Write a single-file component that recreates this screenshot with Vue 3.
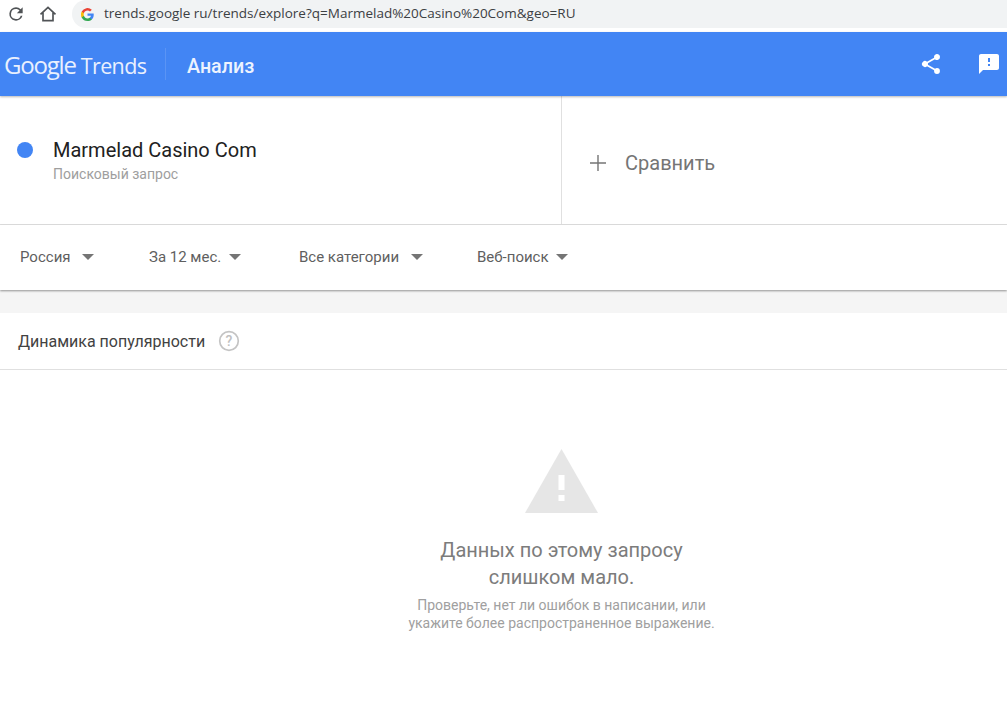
<script setup>
const filters = [
  { label: 'Россия', cls: 'f1' },
  { label: 'За 12 мес.', cls: 'f2' },
  { label: 'Все категории', cls: 'f3' },
  { label: 'Веб-поиск', cls: 'f4' },
]
</script>

<template>
  <div class="page">
    <div class="browser">
      <svg class="nav-icon" viewBox="0 0 24 24" width="20" height="20"><path fill="#505356" d="M17.65 6.35A7.95 7.95 0 0 0 12 4a8 8 0 1 0 7.75 10h-2.08A6 6 0 1 1 12 6c1.66 0 3.14.69 4.22 1.78L13 11h7V4l-2.35 2.35z"/></svg>
      <svg class="nav-icon home" viewBox="0 0 24 24" width="20" height="20"><path fill="none" stroke="#505356" stroke-width="2" d="M3 12.5 12 4l9 8.5M6 10.5V20h12v-9.5"/></svg>
      <div class="url">
        <svg viewBox="0 0 24 24" width="13" height="13"><path fill="#4285f4" d="M23.5 12.3c0-.8-.1-1.600-.2-2.300H12v4.500h6.500a5.500 5.500 0 0 1-2.400 3.600v3h3.900c2.200-2.100 3.500-5.200 3.500-8.800z"/><path fill="#34a853" d="M12 24c3.200 0 6-1.100 8-2.900l-3.900-3c-1.100.7-2.500 1.200-4.100 1.200-3.100 0-5.800-2.100-6.700-5H1.300v3.100A12 12 0 0 0 12 24z"/><path fill="#fbbc05" d="M5.300 14.300a7.200 7.200 0 0 1 0-4.600V6.600h-4a12 12 0 0 0 0 10.800l4-3.100z"/><path fill="#ea4335" d="M12 4.800c1.800 0 3.300.6 4.600 1.800l3.400-3.400A12 12 0 0 0 1.300 6.600l4 3.100c.9-2.800 3.600-4.900 6.700-4.900z"/></svg>
        <span class="url-text">trends.google ru/trends/explore?q=Marmelad%20Casino%20Com&amp;geo=RU</span>
      </div>
    </div>

    <header class="bar">
      <div class="logo"><span class="g">Google</span><span class="t">Trends</span></div>
      <div class="bar-sep"></div>
      <div class="bar-title">Анализ</div>
      <div class="bar-actions">
        <svg viewBox="0 0 24 24" width="24" height="24"><path fill="#fff" d="M18 16.080c-.76 0-1.440.3-1.960.77L8.910 12.700c.05-.23.090-.46.090-.7s-.04-.47-.09-.7l7.050-4.110A2.990 2.990 0 0 0 21 5a3 3 0 1 0-5.910.7L8.040 9.810A3 3 0 1 0 8.040 14.190l7.120 4.160c-.05.21-.08.43-.08.65A2.920 2.920 0 1 0 18 16.080z"/></svg>
        <svg viewBox="0 0 24 24" width="24" height="24"><path fill="#fff" d="M20 2H4c-1.100 0-2 .9-2 2v18l4-4h14c1.100 0 2-.9 2-2V4c0-1.100-.9-2-2-2zm-7 12h-2v-2h2v2zm0-4h-2V6h2v4z"/></svg>
      </div>
    </header>

    <section class="terms">
      <div class="term">
        <span class="dot"></span>
        <div>
          <div class="term-name">Marmelad Casino Com</div>
          <div class="term-sub">Поисковый запрос</div>
        </div>
      </div>
      <div class="compare">
        <svg viewBox="0 0 16 16" width="16" height="16"><path fill="#757575" d="M7.300 0h1.400v7.300H16v1.400H8.700V16H7.300V8.700H0V7.300h7.300z"/></svg>
        <span>Сравнить</span>
      </div>
    </section>

    <nav class="filters">
      <div v-for="f in filters" :key="f.label" class="filter" :class="f.cls">
        <span>{{ f.label }}</span><i class="caret"></i>
      </div>
    </nav>

    <div class="gap"></div>

    <section class="panel">
      <div class="panel-head">
        <span>Динамика популярности</span>
        <svg viewBox="0 0 22 22" width="22" height="22"><circle cx="11" cy="11" r="9.300" fill="none" stroke="#c4c4c4" stroke-width="1.700"/><text x="11" y="15.500" text-anchor="middle" class="q">?</text></svg>
      </div>
      <div class="empty">
        <svg class="warn" viewBox="0 0 73 64" width="73" height="64"><path fill="#e6e6e6" d="M36.500 0 73 64H0z"/><rect x="33.500" y="26" width="6" height="15" fill="#fff"/><rect x="33.500" y="46" width="6" height="6" fill="#fff"/></svg>
        <div class="empty-title">Данных по этому запросу<br>слишком мало.</div>
        <div class="empty-sub">Проверьте, нет ли ошибок в написании, или<br>укажите более распространенное выражение.</div>
      </div>
    </section>
  </div>
</template>

<style scoped>
.page {
  width: 1007px;
  height: 703px;
  overflow: hidden;
  background: #fff;
  font-family: Roboto, "Liberation Sans", sans-serif;
}
.browser {
  height: 32px;
  display: flex;
  align-items: flex-start;
  box-sizing: border-box;
  padding: 4px 0 0 6px;
  background: #fff;
}
.nav-icon { flex: none; }
.home { margin-left: 12px; }
.url {
  flex: 1;
  height: 28px;
  margin: -4px 0 0 14px;
  padding: 0 0 0 9px;
  display: flex;
  align-items: center;
  background: #f1f3f4;
  border-radius: 14px 0 0 14px;
}
.url-text {
  margin: 0 0 2px 10px;
  font: 13.500px "Open Sans", sans-serif;
  color: #3c4043;
  white-space: nowrap;
}
.bar {
  height: 64px;
  display: flex;
  align-items: center;
  background: #4285f4;
  color: #fff;
  box-shadow: 0 1px 2px rgba(0, 0, 0, .28);
  position: relative;
}
.logo {
  width: 165px;
  box-sizing: border-box;
  padding: 1px 0 0 4px;
  display: flex;
  align-items: baseline;
  gap: 5px;
  font-family: "Open Sans", sans-serif;
  color: #e9f0fe;
  white-space: nowrap;
}
.g { font-size: 24px; letter-spacing: -1.200px; }
.t { font-size: 21.500px; letter-spacing: -.6px; }
.bar-sep { width: 1px; height: 32px; background: rgba(255, 255, 255, .13); }
.bar-title { margin: 4px 0 0 21px; font-size: 19.700px; font-weight: 500; color: #edf3fe; }
.bar-actions {
  margin-left: auto;
  padding-right: 6px;
  display: flex;
  gap: 34px;
}
.terms { height: 129px; display: flex; border-bottom: 1px solid #e0e0e0; box-sizing: border-box; }
.term {
  width: 562px;
  box-sizing: border-box;
  padding: 43px 0 0 17px;
  display: flex;
  align-items: flex-start;
  border-right: 1px solid #e0e0e0;
}
.dot {
  width: 16px;
  height: 16px;
  margin: 3px 20px 0 0;
  border-radius: 50%;
  background: #4285f4;
}
.term-name { font-size: 20px; line-height: 23px; color: #212121; }
.term-sub { margin-top: 4px; font-size: 14px; line-height: 16px; color: #9e9e9e; }
.compare {
  flex: 1;
  display: flex;
  align-items: center;
  padding: 6px 0 0 28px;
  gap: 19px;
  font-size: 20px;
  color: #757575;
}
.filters {
  height: 65px;
  display: flex;
  align-items: center;
  box-sizing: border-box;
  padding: 0 0 1px 20px;
  box-shadow: 0 1px 2px rgba(0, 0, 0, .4);
  position: relative;
  font-size: 15px;
  color: #5f5f5f;
}
.filter { display: flex; align-items: center; white-space: nowrap; }
.f1 { width: 129px; }
.f2 { width: 150px; }
.f3 { width: 178px; }
.caret {
  margin-left: 12px;
  width: 0;
  height: 0;
  border-left: 6px solid transparent;
  border-right: 6px solid transparent;
  border-top: 6px solid #757575;
}
.f1 .caret { margin-left: 11px; }
.f2 .caret { margin-left: 8px; }
.f4 .caret { margin-left: 7px; }
.gap { height: 23px; background: #f5f5f5; }
.panel-head {
  height: 57px;
  box-sizing: border-box;
  border-bottom: 1px solid #e0e0e0;
  padding-left: 18px;
  display: flex;
  align-items: center;
  gap: 13px;
  font-size: 16px;
  color: #424242;
}
.q { font: 500 14px Roboto, sans-serif; fill: #c0c0c0; }
.empty {
  display: flex;
  flex-direction: column;
  align-items: center;
  padding: 79px 0 0 116px;
  text-align: center;
}
.warn { display: block; }
.empty-title {
  margin-top: 24px;
  font-size: 20px;
  line-height: 26.500px;
  color: #7c7c7c;
}
.empty-sub {
  margin-top: 6px;
  font-size: 14px;
  line-height: 18px;
  color: #a0a0a0;
}
</style>
